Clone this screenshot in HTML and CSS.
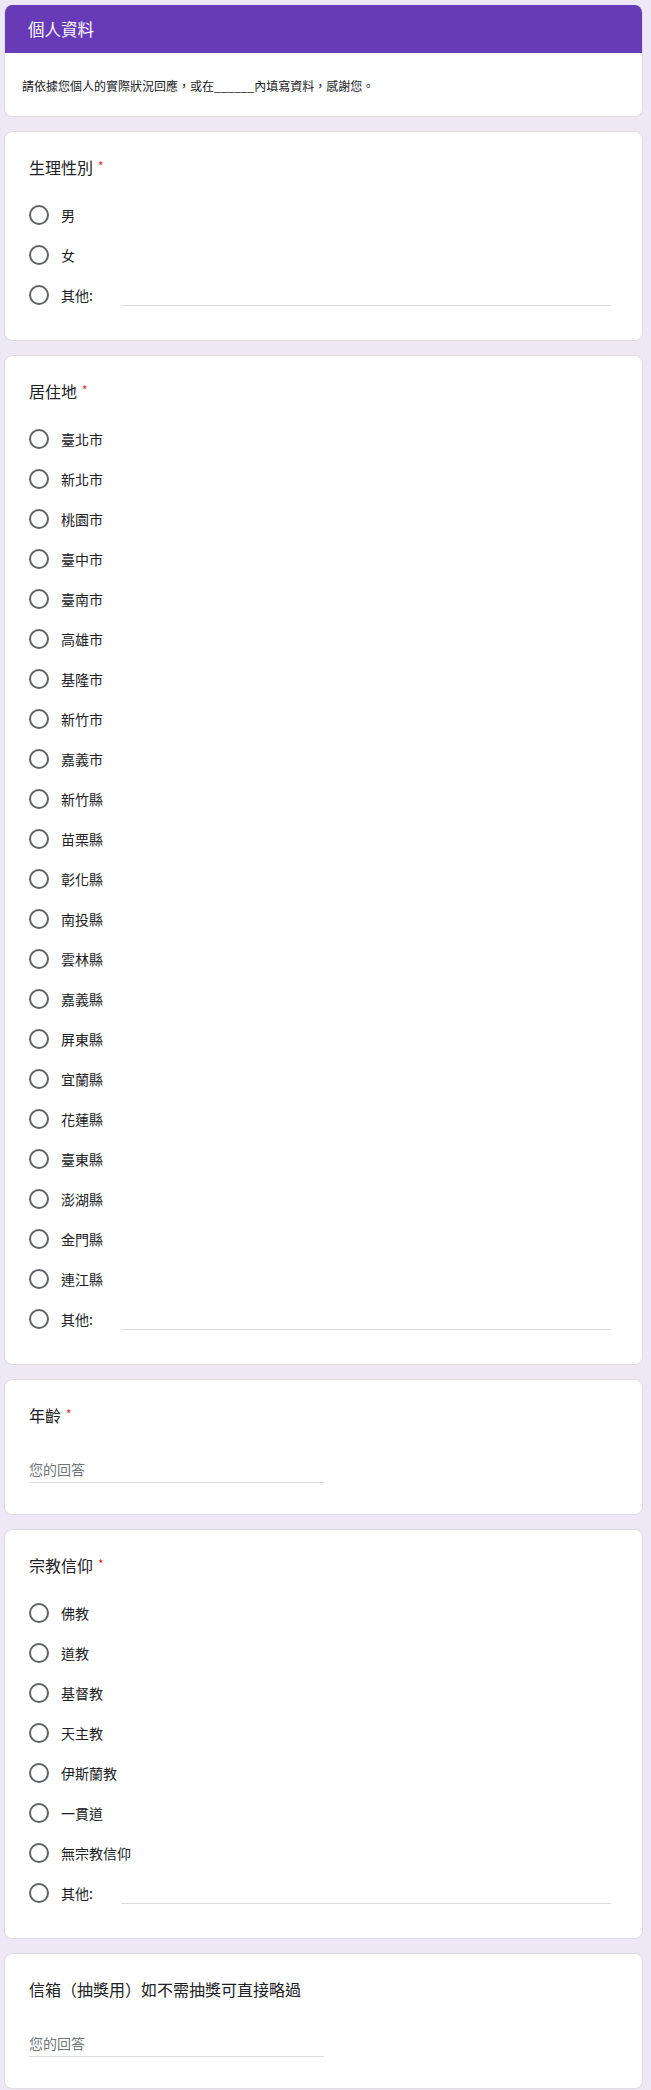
FILE: index.html
```html
<!DOCTYPE html>
<html lang="zh-Hant">
<head>
<meta charset="utf-8">
<title>個人資料</title>
<link rel="stylesheet" href="styles.css">
</head>
<body>
<main class="form">
  <section class="card header-card">
    <div class="band"><h1 class="section-title">個人資料</h1></div>
    <p class="desc">請依據您個人的實際狀況回應，或在______內填寫資料，感謝您。</p>
  </section>

  <section class="card question">
    <h2 class="q-title">生理性別<span class="req">*</span></h2>
    <div class="options">
      <div class="opt"><span class="radio"></span><span class="label">男</span></div>
      <div class="opt"><span class="radio"></span><span class="label">女</span></div>
      <div class="opt"><span class="radio"></span><span class="label">其他:</span><span class="other-input"></span></div>
    </div>
  </section>

  <section class="card question">
    <h2 class="q-title">居住地<span class="req">*</span></h2>
    <div class="options">
      <div class="opt"><span class="radio"></span><span class="label">臺北市</span></div>
      <div class="opt"><span class="radio"></span><span class="label">新北市</span></div>
      <div class="opt"><span class="radio"></span><span class="label">桃園市</span></div>
      <div class="opt"><span class="radio"></span><span class="label">臺中市</span></div>
      <div class="opt"><span class="radio"></span><span class="label">臺南市</span></div>
      <div class="opt"><span class="radio"></span><span class="label">高雄市</span></div>
      <div class="opt"><span class="radio"></span><span class="label">基隆市</span></div>
      <div class="opt"><span class="radio"></span><span class="label">新竹市</span></div>
      <div class="opt"><span class="radio"></span><span class="label">嘉義市</span></div>
      <div class="opt"><span class="radio"></span><span class="label">新竹縣</span></div>
      <div class="opt"><span class="radio"></span><span class="label">苗栗縣</span></div>
      <div class="opt"><span class="radio"></span><span class="label">彰化縣</span></div>
      <div class="opt"><span class="radio"></span><span class="label">南投縣</span></div>
      <div class="opt"><span class="radio"></span><span class="label">雲林縣</span></div>
      <div class="opt"><span class="radio"></span><span class="label">嘉義縣</span></div>
      <div class="opt"><span class="radio"></span><span class="label">屏東縣</span></div>
      <div class="opt"><span class="radio"></span><span class="label">宜蘭縣</span></div>
      <div class="opt"><span class="radio"></span><span class="label">花蓮縣</span></div>
      <div class="opt"><span class="radio"></span><span class="label">臺東縣</span></div>
      <div class="opt"><span class="radio"></span><span class="label">澎湖縣</span></div>
      <div class="opt"><span class="radio"></span><span class="label">金門縣</span></div>
      <div class="opt"><span class="radio"></span><span class="label">連江縣</span></div>
      <div class="opt"><span class="radio"></span><span class="label">其他:</span><span class="other-input"></span></div>
    </div>
  </section>

  <section class="card question text-q">
    <h2 class="q-title">年齡<span class="req">*</span></h2>
    <div class="answer"><span class="placeholder">您的回答</span></div>
  </section>

  <section class="card question">
    <h2 class="q-title">宗教信仰<span class="req">*</span></h2>
    <div class="options">
      <div class="opt"><span class="radio"></span><span class="label">佛教</span></div>
      <div class="opt"><span class="radio"></span><span class="label">道教</span></div>
      <div class="opt"><span class="radio"></span><span class="label">基督教</span></div>
      <div class="opt"><span class="radio"></span><span class="label">天主教</span></div>
      <div class="opt"><span class="radio"></span><span class="label">伊斯蘭教</span></div>
      <div class="opt"><span class="radio"></span><span class="label">一貫道</span></div>
      <div class="opt"><span class="radio"></span><span class="label">無宗教信仰</span></div>
      <div class="opt"><span class="radio"></span><span class="label">其他:</span><span class="other-input"></span></div>
    </div>
  </section>

  <section class="card question text-q">
    <h2 class="q-title">信箱（抽獎用）如不需抽獎可直接略過</h2>
    <div class="answer"><span class="placeholder">您的回答</span></div>
  </section>
</main>
</body>
</html>
```

FILE: styles.css
```css
html, body {
  margin: 0;
  padding: 0;
  background: #ede7f6;
}

body {
  font-family: "Noto Sans CJK TC", "Noto Sans", "Liberation Sans", sans-serif;
  color: #202124;
}

.form {
  display: flex;
  flex-direction: column;
  gap: 14px;
  width: 639px;
  margin-left: 4px;
  padding-top: 5px;
}

.card {
  background: #fff;
  border: 1px solid #dadce0;
  border-radius: 8px;
  box-sizing: border-box;
}

.header-card {
  overflow: hidden;
  border-top: none;
}

.band {
  background: #673ab7;
  height: 48px;
  display: flex;
  align-items: center;
  padding-left: 23px;
}

.section-title {
  margin: 0;
  color: #fff;
  font-size: 16.5px;
  font-weight: 400;
  line-height: 24px;
}

.desc {
  margin: 0;
  padding: 24px 17px 21px;
  font-size: 12px;
  line-height: 18px;
}

.question {
  padding: 23px 24px 25px;
}

.q-title {
  margin: 0;
  height: 24px;
  font-size: 16px;
  font-weight: 400;
  line-height: 24px;
}

.req {
  color: #d93025;
  font-size: 12px;
  line-height: 0;
  padding-left: 5px;
  vertical-align: 3px;
}

.options {
  margin-top: 16px;
  display: flex;
  flex-direction: column;
}

.opt {
  display: flex;
  align-items: center;
  height: 40px;
}

.radio {
  width: 20px;
  height: 20px;
  border: 2px solid #5f6368;
  border-radius: 50%;
  box-sizing: border-box;
  flex: none;
}

.label {
  margin-left: 12px;
  font-size: 14px;
  line-height: 20px;
}

.other-input {
  flex: 1;
  align-self: flex-start;
  height: 30px;
  margin-left: 28px;
  margin-right: 7px;
  border-bottom: 1px solid #dadce0;
}

.text-q {
  padding-bottom: 31px;
}

.answer {
  margin-top: 16px;
  width: 50%;
  height: 40px;
  box-sizing: border-box;
  padding: 16px 0 3px;
  border-bottom: 1px solid #dadce0;
}

.placeholder {
  display: block;
  font-size: 14px;
  line-height: 20px;
  color: #70757a;
}
```
